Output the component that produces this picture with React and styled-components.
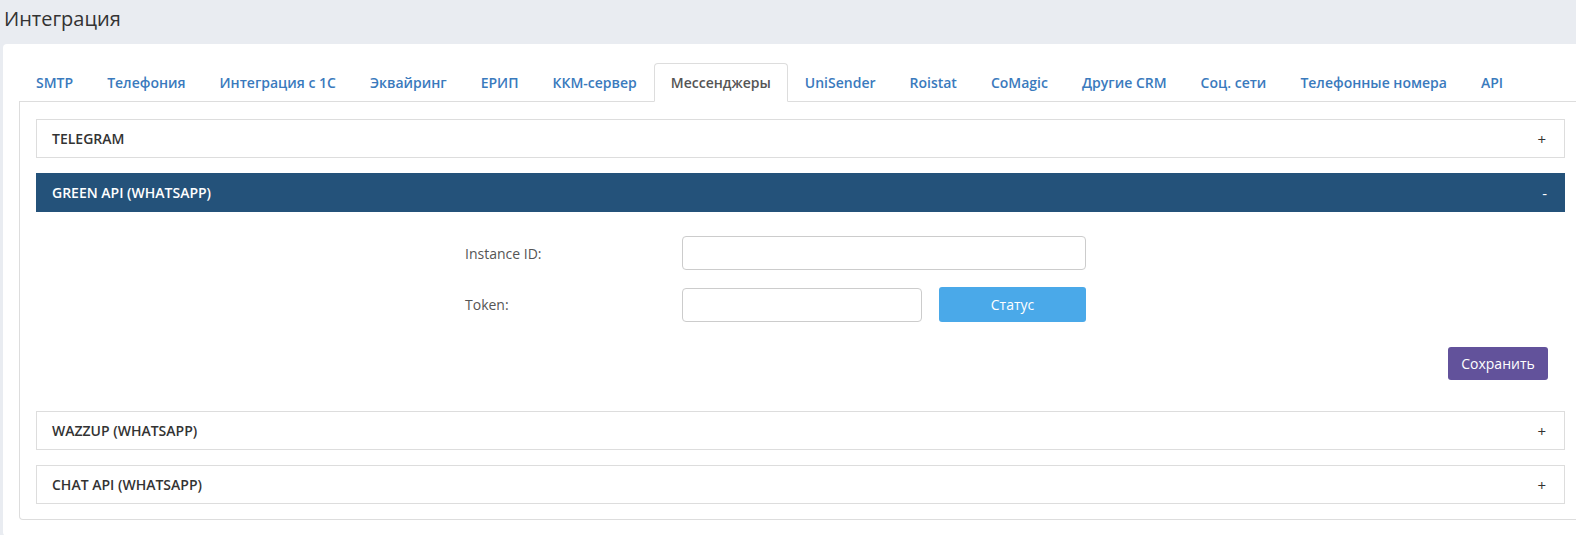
import React from "react";
import styled, { createGlobalStyle } from "styled-components";

const tabs = [
  "SMTP",
  "Телефония",
  "Интеграция с 1С",
  "Эквайринг",
  "ЕРИП",
  "ККМ-сервер",
  "Мессенджеры",
  "UniSender",
  "Roistat",
  "CoMagic",
  "Другие CRM",
  "Соц. сети",
  "Телефонные номера",
  "API",
];

const App = () => {
  return (
    <Page>
      <GlobalStyle />
      <Title>Интеграция</Title>
      <Card>
        <TabBar>
          {tabs.map((tab) => (
            <Tab key={tab} active={tab === "Мессенджеры"}>
              {tab}
            </Tab>
          ))}
        </TabBar>
        <TabContent>
          <Item>
            <ItemHeader>
              <span>Telegram</span>
              <Sign>+</Sign>
            </ItemHeader>
          </Item>
          <Item open>
            <ItemHeader open>
              <span>Green API (WhatsApp)</span>
              <Sign>-</Sign>
            </ItemHeader>
            <ItemBody>
              <FormRow>
                <Label>Instance ID:</Label>
                <Input wide />
              </FormRow>
              <FormRow>
                <Label>Token:</Label>
                <Input />
                <StatusBtn>Статус</StatusBtn>
              </FormRow>
              <SaveRow>
                <SaveBtn>Сохранить</SaveBtn>
              </SaveRow>
            </ItemBody>
          </Item>
          <Item>
            <ItemHeader>
              <span>Wazzup (WhatsApp)</span>
              <Sign>+</Sign>
            </ItemHeader>
          </Item>
          <Item>
            <ItemHeader>
              <span>Chat API (WhatsApp)</span>
              <Sign>+</Sign>
            </ItemHeader>
          </Item>
        </TabContent>
      </Card>
    </Page>
  );
};

export default App;

const GlobalStyle = createGlobalStyle`
  body {
    margin: 0;
    background: #e9ecf1;
    font-family: "Open Sans", "Noto Sans", sans-serif;
    overflow: hidden;
  }
`;

const Page = styled.div`
  padding-left: 3px;
  width: 1600px;
`;

const Title = styled.h1`
  margin: 0;
  height: 44px;
  line-height: 38px;
  padding-left: 1px;
  font-size: 20px;
  font-weight: 400;
  color: #333;
`;

const Card = styled.div`
  width: 1595px;
  background: #fff;
  border-radius: 4px;
  padding: 19px 16px 16px;
  box-sizing: border-box;
`;

const TabBar = styled.div`
  display: flex;
  width: 100%;
  border-bottom: 1px solid #ddd;
`;

const Tab = styled.div`
  flex: none;
  height: 37px;
  line-height: 38px;
  padding: 0 16px;
  margin-bottom: ${(p) => (p.active ? "-1px" : "0")};
  font-size: 14px;
  font-weight: 600;
  white-space: nowrap;
  color: ${(p) => (p.active ? "#555" : "#3a7abd")};
  background: ${(p) => (p.active ? "#fff" : "transparent")};
  border: 1px solid ${(p) => (p.active ? "#ddd" : "transparent")};
  border-bottom: ${(p) => (p.active ? "1px solid #fff" : "none")};
  border-radius: 4px 4px 0 0;
`;

const TabContent = styled.div`
  border: 1px solid #ddd;
  border-top: none;
  border-radius: 0 0 4px 4px;
  padding: 17px 16px 15px;
  display: flex;
  flex-direction: column;
  gap: 15px;
`;

const Item = styled.div`
  border: ${(p) => (p.open ? "none" : "1px solid #ddd")};
`;

const ItemHeader = styled.div`
  display: flex;
  justify-content: space-between;
  align-items: center;
  height: ${(p) => (p.open ? "39px" : "37px")};
  padding: 0 18px 0 ${(p) => (p.open ? "16px" : "15px")};
  background: ${(p) => (p.open ? "#24527a" : "#fff")};
  color: ${(p) => (p.open ? "#fff" : "#333")};
  font-size: 14px;
  font-weight: 600;
  text-transform: uppercase;
`;

const Sign = styled.span`
  font-size: 15px;
  font-weight: 400;
`;

const ItemBody = styled.div`
  padding: 24px 17px 16px 429px;
  display: flex;
  flex-direction: column;
  gap: 17px;
`;

const FormRow = styled.div`
  display: flex;
  align-items: center;
  gap: 17px;
`;

const Label = styled.div`
  width: 200px;
  font-size: 14px;
  color: #555;
`;

const Input = styled.input`
  width: ${(p) => (p.wide ? "404px" : "240px")};
  height: 34px;
  box-sizing: border-box;
  border: 1px solid #ccc;
  border-radius: 4px;
  background: #fff;
  font-family: inherit;
  font-size: 14px;
  padding: 0 10px;
  outline: none;
`;

const StatusBtn = styled.button`
  width: 147px;
  height: 35px;
  border: none;
  border-radius: 3px;
  background: #4aa9e9;
  color: #fff;
  font-family: inherit;
  font-size: 14px;
`;

const SaveRow = styled.div`
  display: flex;
  justify-content: flex-end;
  margin-top: 8px;
`;

const SaveBtn = styled.button`
  width: 100px;
  height: 33px;
  border: none;
  border-radius: 3px;
  background: #62529b;
  color: #fff;
  font-family: inherit;
  font-size: 14px;
`;
